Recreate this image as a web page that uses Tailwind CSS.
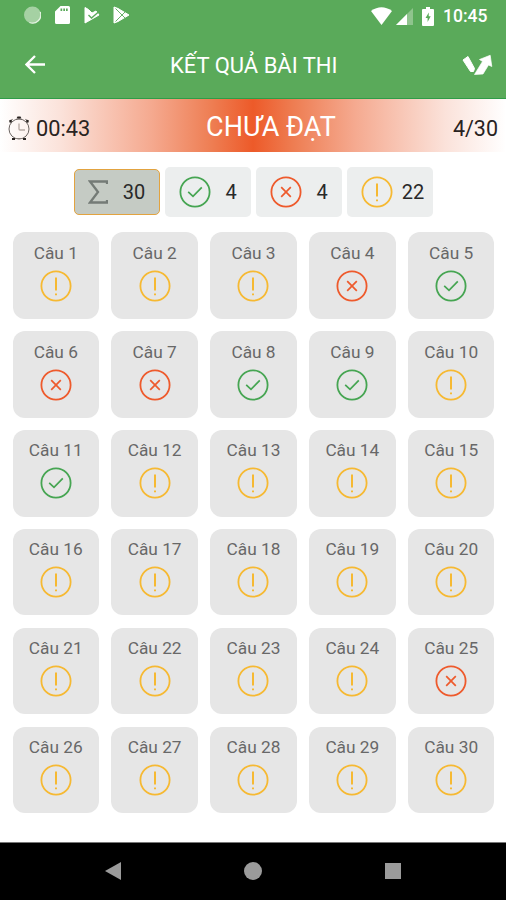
<!DOCTYPE html>
<html lang="vi">
<head>
<meta charset="utf-8">
<title>Kết quả bài thi</title>
<script src="https://cdn.jsdelivr.net/npm/@tailwindcss/browser@4"></script>
</head>
<body class="bg-white">
<svg class="hidden">
  <symbol id="warn" viewBox="0 0 32 32"><circle cx="16" cy="16" r="14.6" fill="none" stroke="#f6b932" stroke-width="1.8"/><path d="M16 7.400v13.200M16 23.600v1.700" fill="none" stroke="#f6b932" stroke-width="2"/></symbol>
  <symbol id="bad" viewBox="0 0 32 32"><circle cx="16" cy="16" r="14.6" fill="none" stroke="#ee5a2c" stroke-width="1.8"/><path d="M11.200 11.200l9.600 9.600M20.800 11.200l-9.600 9.600" fill="none" stroke="#ee5a2c" stroke-width="1.700"/></symbol>
  <symbol id="ok" viewBox="0 0 32 32"><circle cx="16" cy="16" r="14.6" fill="none" stroke="#46a552" stroke-width="1.8"/><path d="M9.200 15.800l4.800 4.600 8.800-9" fill="none" stroke="#46a552" stroke-width="1.700"/></symbol>
</svg>
<div class="flex h-[900px] w-[506px] flex-col overflow-hidden bg-white font-['Roboto','Noto_Sans',sans-serif]">
  <header class="h-[99px] shrink-0 border-b-[1.500px] border-[#2f9c48] bg-[#5aaa5a] text-white">
    <div class="flex h-8 items-center justify-between pl-6 pr-[18px]">
      <div class="flex items-center pb-0.5">
        <svg class="h-[18px] w-[17px]" viewBox="0 0 17 18"><circle cx="8.500" cy="9" r="8.500" fill="#a5d1a3"/><path d="M16.300 6A8.300 8.300 0 0 1 5.400 16.500" fill="none" stroke="#e3f2e1" stroke-width="1.300"/></svg>
        <svg class="ml-3.5 h-[18px] w-[15px]" viewBox="0 0 15 18"><path fill="#fff" fill-rule="evenodd" d="M5.500 0H13.500Q15 0 15 1.500V16.500Q15 18 13.500 18H1.500Q0 18 0 16.500V5.500ZM5.500 2.500V5H7.200V2.500ZM8.300 2.500V5H10V2.500ZM11 2.500V5H12.700V2.500Z"/></svg>
        <svg class="ml-3.5 h-[18px] w-4" viewBox="0 0 16 18"><path d="M1 1.500L4.500 3.500 8 7 12 5 15 9 1 17z" fill="#fff" stroke="#fff" stroke-linejoin="round"/><path d="M4.500 9l3 3 7.500-6.500" fill="none" stroke="#5aaa5a" stroke-width="1.400"/></svg>
        <svg class="ml-[13px] h-[18px] w-[17px]" viewBox="0 0 17 18"><path d="M1 1l4 1.500 11 6.500L5 15.500 1 17z" fill="#fff" stroke="#fff" stroke-linejoin="round"/><path d="M2.500 2.500L12 12M2.500 15.500L12 6" fill="none" stroke="#5aaa5a" stroke-width=".9"/></svg>
      </div>
      <div class="flex items-center">
        <svg class="h-[18px] w-[21px]" viewBox="0 0 21 18"><path d="M0 4Q10.500-3.500 21 4L10.500 18Z" fill="#fff"/></svg>
        <svg class="ml-1 h-[17px] w-[17px]" viewBox="0 0 17 17"><path d="M17 0v17H0z" fill="#8fc48d"/><path d="M11 6v11H0z" fill="#fff"/></svg>
        <svg class="ml-[9px] h-[19px] w-3" viewBox="0 0 12 19"><path fill="#fff" d="M4 0h4v2h3q1 0 1 1v15q0 1-1 1H1q-1 0-1-1V3q0-1 1-1h3z"/><path d="M6.800 5.500L3.500 11H5.600V15L8.700 9.300H6.700Z" fill="#5aaa5a"/></svg>
        <span class="ml-[9px] w-[45px] whitespace-nowrap text-[17.500px] font-medium leading-8">10:45</span>
      </div>
    </div>
    <div class="grid h-[66px] grid-cols-[145px_1fr_29px] items-center pl-[25px] pr-3.5">
      <svg class="h-5 w-[29px]" viewBox="0 0 29 20"><path d="M20 9.500H2M10 1L1.500 9.500l8.500 8.500" fill="none" stroke="#fff" stroke-width="2.300"/></svg>
      <h1 class="whitespace-nowrap pt-0.5 text-[22px] leading-[26px]">KẾT QUẢ BÀI THI</h1>
      <svg class="h-[21px] w-[29px] overflow-visible" viewBox="0 0 29 21"><path d="M0 5L5 1.500 11.500 13.500 10.500 16.500 7.500 16.500Z" fill="#fff" stroke="#fff" stroke-linejoin="round"/><path d="M11.500 19.500L19.500 6.500 16.500 4.500 27.200 0.300 28.800 11.500 25.500 10 20 19Z" fill="#fff" stroke="#fff" stroke-width=".7" stroke-linejoin="round"/></svg>
    </div>
  </header>
  <section class="grid h-[53px] shrink-0 grid-cols-[1fr_auto_1fr] items-center bg-[linear-gradient(90deg,#ffffff_0%,#fbe2da_12%,#f5a98f_30%,#ee7d52_42%,#ed5a29_50%,#ee7d52_58%,#f5a98f_70%,#fbe2da_88%,#ffffff_100%)] px-2 pt-1.5">
    <div class="flex items-center text-[22px] text-[#292321]">
      <svg class="mr-1.5 h-[26px] w-[22px]" viewBox="0 0 22 26"><circle cx="11" cy="13" r="10" fill="none" stroke="#6c6562" stroke-width="1"/><path d="M11 7.500v5.500q0 1 1 1h5" fill="none" stroke="#b5a9a4" stroke-width="1.300"/><path d="M11 1v3M1.500 5.800l3.300-2.600M20.500 5.800l-3.300-2.600M5 22.500h12" fill="none" stroke="#8a827e" stroke-width="1"/><path d="M9.500 .5h3l1 2h-5zM1 4.500l2.500-1 .5 2-2 1.500zM21 4.500l-2.500-1-.5 2 2 1.500zM4 22h3v2H4zM15 22h3v2h-3z" fill="#292321"/></svg>
      <span class="text-[21.800px] leading-[26px]">00:43</span>
    </div>
    <div class="whitespace-nowrap pb-[3px] pl-9 text-[27px] leading-8 text-white">CHƯA ĐẠT</div>
    <div class="text-right text-[21.500px] leading-[26px] text-[#292321]">4/30</div>
  </section>
  <section class="mt-[15px] flex h-[50px] shrink-0 items-center gap-[5px] pl-[74px] text-[20px] text-[#292929]">
    <div class="flex h-[46px] w-[86px] items-center rounded-[5px] border-[1.500px] border-[#e2a340] bg-[#c5cbc4] pl-[13px]">
      <svg class="h-6 w-5" viewBox="0 0 20 24"><path d="M19 4V1.500H2L10 12 2 22.500H19V20" fill="none" stroke="#747b76" stroke-width="2.300"/></svg>
      <span class="ml-2.5 w-8 text-center">30</span>
    </div>
    <div class="flex h-[50px] w-[86px] items-center rounded-[5px] bg-[#eceeee] pl-3.5"><svg class="h-8 w-8"><use href="#ok"/></svg><span class="ml-1 w-8 text-center">4</span></div>
    <div class="flex h-[50px] w-[86px] items-center rounded-[5px] bg-[#eceeee] pl-3.5"><svg class="h-8 w-8"><use href="#bad"/></svg><span class="ml-1 w-8 text-center">4</span></div>
    <div class="flex h-[50px] w-[86px] items-center rounded-[5px] bg-[#eceeee] pl-3.5"><svg class="h-8 w-8"><use href="#warn"/></svg><span class="ml-1 w-8 text-center">22</span></div>
  </section>
  <main id="grid" class="mt-[15.300px] grid grid-cols-[repeat(5,86.600px)] gap-[12.250px] pl-[12.500px]"></main>
  <nav class="mt-auto flex h-[58.500px] shrink-0 items-center border-t border-[#777] bg-black pl-[105px]">
    <svg class="h-[18px] w-4" viewBox="0 0 16 18"><path d="M16 0v18L0 9z" fill="#9b9b9b"/></svg>
    <span class="ml-[123px] h-[18px] w-[18px] rounded-full bg-[#9b9b9b]"></span>
    <span class="ml-[123px] h-4 w-4 bg-[#9b9b9b]"></span>
  </nav>
</div>
<script>
  const status = { 4: 'bad', 5: 'ok', 6: 'bad', 7: 'bad', 8: 'ok', 9: 'ok', 11: 'ok', 25: 'bad' };
  let cells = '';
  for (let i = 1; i <= 30; i++) {
    cells += `<div class="flex h-[86.600px] flex-col items-center rounded-[12px] bg-[#e6e6e6] pt-[7.500px]"><span class="whitespace-nowrap text-[17.300px] leading-[26px] text-[#686868]">Câu ${i}</span><svg class="mt-1 h-8 w-8"><use href="#${status[i] || 'warn'}"/></svg></div>`;
  }
  document.getElementById('grid').innerHTML = cells;
</script>
</body>
</html>
